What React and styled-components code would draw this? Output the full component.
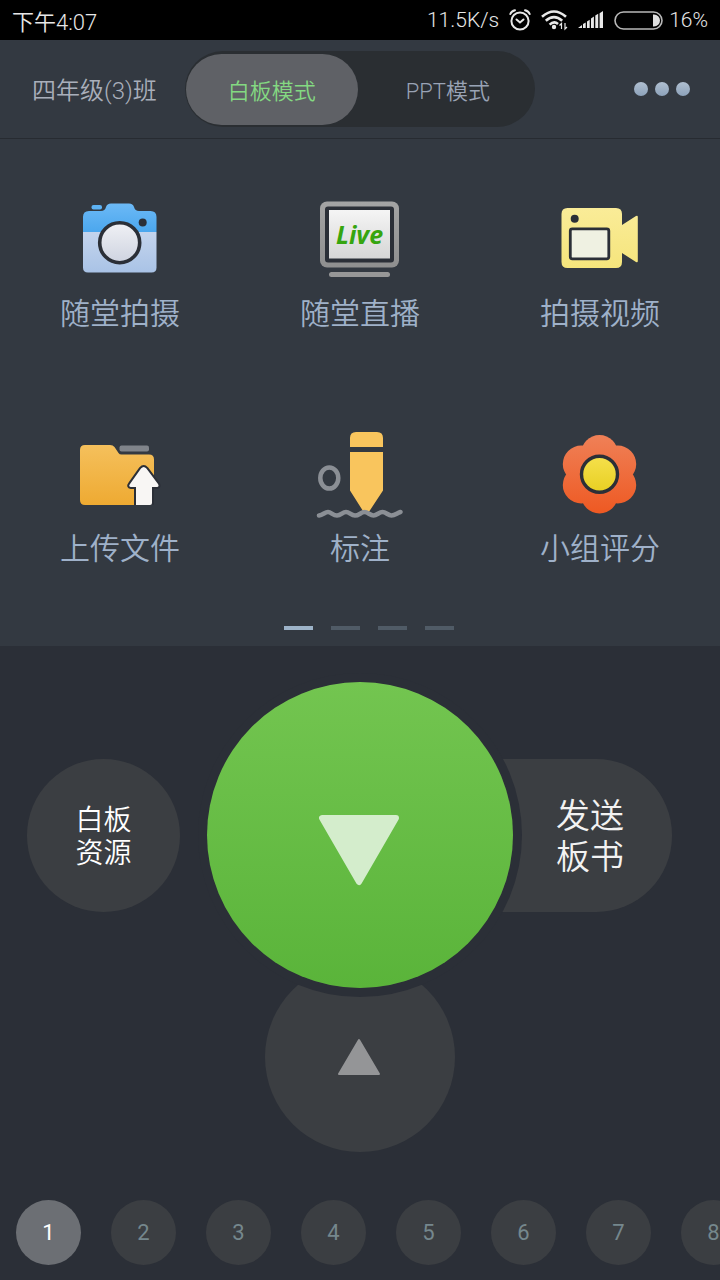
import React, { useState } from 'react';
import styled, { createGlobalStyle } from 'styled-components';

const GlobalStyle = createGlobalStyle`
  * {
    box-sizing: border-box;
  }

  body {
    margin: 0;
    background: #2b2f37;
    font-family: Roboto, "Noto Sans CJK SC", sans-serif;
    font-weight: 350;
  }

  button {
    margin: 0;
    padding: 0;
    border: 0;
    background: none;
    color: inherit;
    font: inherit;
    cursor: pointer;
  }
`;

const Screen = styled.div`
  display: flex;
  flex-direction: column;
  min-height: 100vh;
  overflow: hidden;
`;

const StatusBar = styled.div`
  display: flex;
  align-items: center;
  justify-content: space-between;
  height: 40px;
  padding: 0 12px;
  background: #000;
  color: #e8e8e8;
  font-size: 22px;
`;

const StatusGroup = styled.div`
  display: flex;
  align-items: center;
  gap: 10px;
  font-size: 21px;
`;

const BatteryGroup = styled.div`
  display: flex;
  align-items: center;
  gap: 6px;
`;

const Header = styled.header`
  display: flex;
  align-items: center;
  height: 99px;
  padding: 0 30px 0 32px;
  background: #333941;
  border-bottom: 1px solid #272b31;
`;

const ClassName = styled.h1`
  margin: 0;
  padding-bottom: 2px;
  color: #a9afbb;
  font-size: 24px;
  font-weight: 350;
`;

const ModeSwitch = styled.div`
  display: flex;
  gap: 4px;
  width: 350px;
  height: 76px;
  margin-left: 28px;
  padding: 3px 1px 2px;
  border-radius: 38px;
  background: #2a2e32;
`;

const ModeButton = styled.button`
  flex: 1;
  padding-bottom: 2px;
  border-radius: 36px;
  background: ${({ $active }) => ($active ? '#5f6166' : 'transparent')};
  color: ${({ $active }) => ($active ? '#84d982' : '#99a3b5')};
  font-size: 22px;
`;

const MoreButton = styled.button`
  display: flex;
  gap: 7px;
  margin-left: auto;
`;

const Dot = styled.span`
  width: 14px;
  height: 14px;
  border-radius: 50%;
  background: linear-gradient(#b0bfd0, #8da2ba);
`;

const Tools = styled.section`
  padding: 51px 0 16px;
  background: #333941;
`;

const ToolGrid = styled.div`
  display: grid;
  grid-template-columns: repeat(3, 1fr);
  row-gap: 87px;
`;

const Tool = styled.button`
  display: flex;
  flex-direction: column;
  align-items: center;
  color: #9fb1c9;
  font-size: 30px;
  line-height: 48px;
`;

const Pager = styled.div`
  display: flex;
  justify-content: center;
  gap: 18px;
  margin-top: 53px;
  padding-left: 18px;
`;

const PageMark = styled.span`
  width: 29px;
  height: 4px;
  background: ${({ $active }) => ($active ? '#9db3c8' : '#505b66')};
`;

const Remote = styled.section`
  display: flex;
  flex-direction: column;
  align-items: center;
  padding-top: 36px;
`;

const RemoteRow = styled.div`
  display: grid;
  grid-template-columns: 1fr 306px 1fr;
  align-items: center;
  width: 100%;
`;

const RoundButton = styled.button`
  justify-self: end;
  width: 153px;
  height: 153px;
  margin-right: 27px;
  padding-top: 4px;
  border-radius: 50%;
  background: #3b3e42;
  color: #fff;
  font-size: 28px;
  line-height: 33px;
`;

const SendButton = styled.button`
  justify-self: start;
  width: 172px;
  height: 153px;
  margin-left: -13px;
  padding: 4px 0 0 8px;
  border-radius: 0 76px 76px 0;
  background: #3b3e42;
  color: #f2f2f2;
  font-size: 34px;
  line-height: 41px;
`;

// the ring cuts into the buttons lying behind
const NextButton = styled.button`
  position: relative;
  z-index: 1;
  display: flex;
  align-items: center;
  justify-content: center;
  width: 306px;
  height: 306px;
  padding-top: 30px;
  border-radius: 50%;
  background: linear-gradient(#73c550, #5ab43a);
  box-shadow: 0 0 0 9px #2b2f37;
`;

const PrevButton = styled.button`
  display: flex;
  align-items: center;
  justify-content: center;
  width: 190px;
  height: 190px;
  margin-top: -26px;
  border-radius: 50%;
  background: #3b3e42;
`;

const SlideList = styled.nav`
  display: flex;
  gap: 30px;
  margin-top: 48px;
  padding: 0 0 15px 16px;
  overflow-x: auto;
  scrollbar-width: none;
`;

const SlideButton = styled.button`
  flex: none;
  width: 65px;
  height: 65px;
  border-radius: 50%;
  background: ${({ $active }) => ($active ? '#6c6f74' : '#3b3e42')};
  color: ${({ $active }) => ($active ? '#fff' : '#75878d')};
  font-size: 22px;
  font-weight: 400;
`;

const AlarmIcon = () => (
  <svg width="22" height="22" viewBox="0 0 22 22" fill="none" stroke="#e8e8e8" strokeWidth="2" strokeLinecap="round">
    <circle cx="11" cy="12" r="8.6" />
    <path d="M7.5 10.5l3.5 3 3.5-3M1.3 5Q2.5 2 6 1.2M20.7 5Q19.5 2 16 1.2" />
  </svg>
);

const WifiIcon = () => (
  <svg width="27" height="22" viewBox="0 0 27 22" fill="none" stroke="#e8e8e8" strokeWidth="2.6">
    <path d="M1 7.8Q13 -2.8 25 7.8M4.8 11.8Q13 4.6 21.2 11.8M8.6 15.6Q13 11.6 17 15" />
    <circle cx="13" cy="18" r="2.2" fill="#e8e8e8" stroke="none" />
    <path d="M20.5 20v-5.5l-2 2M24 14v6l2-2" strokeWidth="1.2" />
  </svg>
);

const SignalIcon = () => (
  <svg width="26" height="18" viewBox="0 0 26 18" fill="#e8e8e8">
    <path d="M0 17l4-3v3zM5 13l2.7-1.6V17H5zM9 10.5l2.7-1.7V17H9zM13 7.5l2.9-1.9V17H13zM17.3 4.6l2.9-1.9V17h-2.9zM21.6 2.2L25 0v17h-3.4z" />
  </svg>
);

const BatteryIcon = () => (
  <svg width="49" height="19" viewBox="0 0 49 19">
    <rect x="1" y="1" width="47" height="17" rx="8.5" fill="none" stroke="#b8b8b8" strokeWidth="1.6" />
    <path d="M39 3.5h1a6 6 0 0 1 0 12h-1z" fill="#dedede" />
  </svg>
);

const CameraIcon = () => (
  <svg width="100" height="100" viewBox="0 0 100 100">
    <defs>
      <linearGradient id="cameraTop" x1="0" y1="0" x2="0" y2="1">
        <stop offset="0" stopColor="#6cb9f6" />
        <stop offset="1" stopColor="#4ba7ee" />
      </linearGradient>
      <linearGradient id="cameraBody" x1="0" y1="0" x2="0" y2="1">
        <stop offset="0" stopColor="#c4d4ed" />
        <stop offset="1" stopColor="#a9c3e6" />
      </linearGradient>
      <linearGradient id="lens" x1="0" y1="0" x2="0" y2="1">
        <stop offset="0" stopColor="#f0f1f5" />
        <stop offset="1" stopColor="#ced3e0" />
      </linearGradient>
    </defs>
    <path d="M13 42V27q0-6 6-6h12q4 0 5-4 1-3.5 5-3.5h18q4 0 5 3.5 1 4 5 4h11.5q6 0 6 6v15z" fill="url(#cameraTop)" />
    <path d="M13 42h73.5v35.500q0 5-5 5H18q-5 0-5-5z" fill="url(#cameraBody)" />
    <rect x="21.5" y="15" width="10.5" height="4.5" rx="2" fill="#5db2f3" />
    <circle cx="49.7" cy="52.7" r="20" fill="url(#lens)" stroke="#2b2f37" strokeWidth="3.6" />
    <circle cx="72.7" cy="32.5" r="4" fill="#2b2f37" />
  </svg>
);

const LiveIcon = () => (
  <svg width="100" height="100" viewBox="0 0 100 100">
    <defs>
      <linearGradient id="frame" x1="0" y1="0" x2="0" y2="1">
        <stop offset="0" stopColor="#a4a4a4" />
        <stop offset="1" stopColor="#8f8f8f" />
      </linearGradient>
      <linearGradient id="screen" x1="0" y1="0" x2="0" y2="1">
        <stop offset="0" stopColor="#f5f5f5" />
        <stop offset="1" stopColor="#d6d6d6" />
      </linearGradient>
    </defs>
    <rect x="10" y="11.5" width="79" height="66" rx="7" fill="url(#frame)" />
    <rect x="15" y="16.5" width="69" height="56" rx="3" fill="#2b2f37" />
    <rect x="19" y="20" width="61" height="48.5" fill="url(#screen)" />
    <text x="26" y="54" fill="#36a50f" fontFamily="Open Sans, sans-serif" fontSize="25" fontWeight="700" fontStyle="italic">Live</text>
    <rect x="19" y="82" width="61" height="5" rx="2.5" fill="#979797" />
  </svg>
);

const VideoIcon = () => (
  <svg width="100" height="100" viewBox="0 0 100 100">
    <defs>
      <linearGradient id="video" x1="0" y1="0" x2="0" y2="1">
        <stop offset="0" stopColor="#faec98" />
        <stop offset="1" stopColor="#f5e57c" />
      </linearGradient>
    </defs>
    <path d="M17.5 18H66q6 0 6 6v11l14-9q1.8-1 1.800 1v44q0 2-1.800 1L72 63v9q0 6-6 6H17.5q-6 0-6-6V24q0-6 6-6z" fill="url(#video)" />
    <circle cx="24.7" cy="28.7" r="4" fill="#2b2f37" />
    <rect x="20.3" y="38.8" width="38.5" height="30" rx="2" fill="#eff1e2" stroke="#2b2f37" strokeWidth="2.8" />
  </svg>
);

const UploadIcon = () => (
  <svg width="100" height="100" viewBox="0 0 100 100">
    <defs>
      <linearGradient id="folder" x1="0" y1="0" x2="0" y2="1">
        <stop offset="0" stopColor="#f5c05c" />
        <stop offset="1" stopColor="#eeaa32" />
      </linearGradient>
    </defs>
    <path d="M15 20h25q3 0 4.5 2l4 6q1 1.5 3 1.5H79q5 0 5 5V75q0 5-5 5H15q-5 0-5-5V25q0-5 5-5z" fill="url(#folder)" />
    <rect x="49.5" y="20.5" width="29.5" height="6" rx="2" fill="#80848a" />
    <path
      d="M66 80V62h-5q-3-.5-1-3l11-15.500q2.7-3 5.4 0L88 59q1.500 2.5-1 3h-5v16q0 2-2 2z"
      fill="#f8f6f4"
      stroke="#2b2f37"
      strokeWidth="4"
      strokeLinejoin="round"
      paintOrder="stroke"
    />
    <path d="M58 82h28" stroke="#333941" strokeWidth="4" />
  </svg>
);

const PencilIcon = () => (
  <svg width="100" height="100" viewBox="0 0 100 100">
    <path d="M40 22v-9q0-6 6-6h21q6 0 6 6v9zM40 27h33v38.500L59.5 86q-3 3-6.500 0L40 65.500z" fill="#f9c55d" />
    <ellipse cx="19.3" cy="53" rx="9" ry="10.6" fill="none" stroke="#8b8f95" strokeWidth="4.5" />
    <path
      d="M9 90.500C13 90 15 87 18 87S23 90.500 27 90.500S32.500 87 36 87S41 90.500 45 90.500S51 87 54.500 87S60 90.500 63.500 90.500S69 87 72.500 87S78 90.500 81.500 90.500S87 88 90.500 87"
      fill="none"
      stroke="#8b8f95"
      strokeWidth="4.6"
      strokeLinecap="round"
    />
  </svg>
);

const FlowerIcon = () => (
  <svg width="100" height="100" viewBox="0 0 100 100">
    <defs>
      <linearGradient id="petals" gradientUnits="userSpaceOnUse" x1="0" y1="10" x2="0" y2="89">
        <stop offset="0" stopColor="#ef8057" />
        <stop offset="1" stopColor="#ee5922" />
      </linearGradient>
      <linearGradient id="pistil" x1="0" y1="0" x2="0" y2="1">
        <stop offset="0" stopColor="#f5e04c" />
        <stop offset="1" stopColor="#e8cf22" />
      </linearGradient>
    </defs>
    <g fill="url(#petals)">
      <circle cx="49.5" cy="28.5" r="18.5" />
      <circle cx="67.7" cy="39" r="18.5" />
      <circle cx="67.7" cy="60" r="18.5" />
      <circle cx="49.5" cy="70" r="18.5" />
      <circle cx="31.3" cy="60" r="18.5" />
      <circle cx="31.3" cy="39" r="18.5" />
    </g>
    <circle cx="49.5" cy="49.3" r="18" fill="url(#pistil)" stroke="#2b2f37" strokeWidth="3.4" />
  </svg>
);

const tools = [
  { label: '随堂拍摄', Icon: CameraIcon },
  { label: '随堂直播', Icon: LiveIcon },
  { label: '拍摄视频', Icon: VideoIcon },
  { label: '上传文件', Icon: UploadIcon },
  { label: '标注', Icon: PencilIcon },
  { label: '小组评分', Icon: FlowerIcon },
];

const modes = ['白板模式', 'PPT模式'];
const slides = [1, 2, 3, 4, 5, 6, 7, 8];

const App = () => {
  const [mode, setMode] = useState(modes[0]);
  const [slide, setSlide] = useState(1);

  const handleNext = () => {
    setSlide(Math.min(slide + 1, slides.length));
  }

  const handlePrev = () => {
    setSlide(Math.max(slide - 1, 1));
  }

  return (
    <Screen>
      <GlobalStyle />
      <StatusBar>
        <span>下午4:07</span>
        <StatusGroup>
          <span>11.5K/s</span>
          <AlarmIcon />
          <WifiIcon />
          <SignalIcon />
          <BatteryGroup>
            <BatteryIcon />
            <span>16%</span>
          </BatteryGroup>
        </StatusGroup>
      </StatusBar>
      <Header>
        <ClassName>四年级(3)班</ClassName>
        <ModeSwitch>
          {modes.map((name) => (
            <ModeButton
              key={name}
              $active={name === mode}
              aria-pressed={name === mode}
              onClick={() => setMode(name)}
            >{name}
            </ModeButton>
          ))}
        </ModeSwitch>
        <MoreButton aria-label="更多">
          <Dot />
          <Dot />
          <Dot />
        </MoreButton>
      </Header>
      <Tools>
        <ToolGrid>
          {tools.map(({ label, Icon }) => (
            <Tool key={label}>
              <Icon />
              <span>{label}</span>
            </Tool>
          ))}
        </ToolGrid>
        <Pager>
          <PageMark $active />
          <PageMark />
          <PageMark />
          <PageMark />
        </Pager>
      </Tools>
      <Remote>
        <RemoteRow>
          <RoundButton>白板<br />资源</RoundButton>
          <NextButton aria-label="下一页" onClick={handleNext}>
            <svg width="82" height="72" viewBox="0 0 82 72">
              <path d="M3 4h74L40 68z" fill="#d4edcc" stroke="#d4edcc" strokeWidth="6" strokeLinejoin="round" />
            </svg>
          </NextButton>
          <SendButton>发送<br />板书</SendButton>
        </RemoteRow>
        <PrevButton aria-label="上一页" onClick={handlePrev}>
          <svg width="44" height="38" viewBox="0 0 44 38">
            <path d="M21 2L41 36H1z" fill="#949597" stroke="#949597" strokeWidth="2" strokeLinejoin="round" />
          </svg>
        </PrevButton>
      </Remote>
      <SlideList>
        {slides.map((n) => (
          <SlideButton key={n} $active={n === slide} onClick={() => setSlide(n)}>{n}</SlideButton>
        ))}
      </SlideList>
    </Screen>
  );
}

export default App;
